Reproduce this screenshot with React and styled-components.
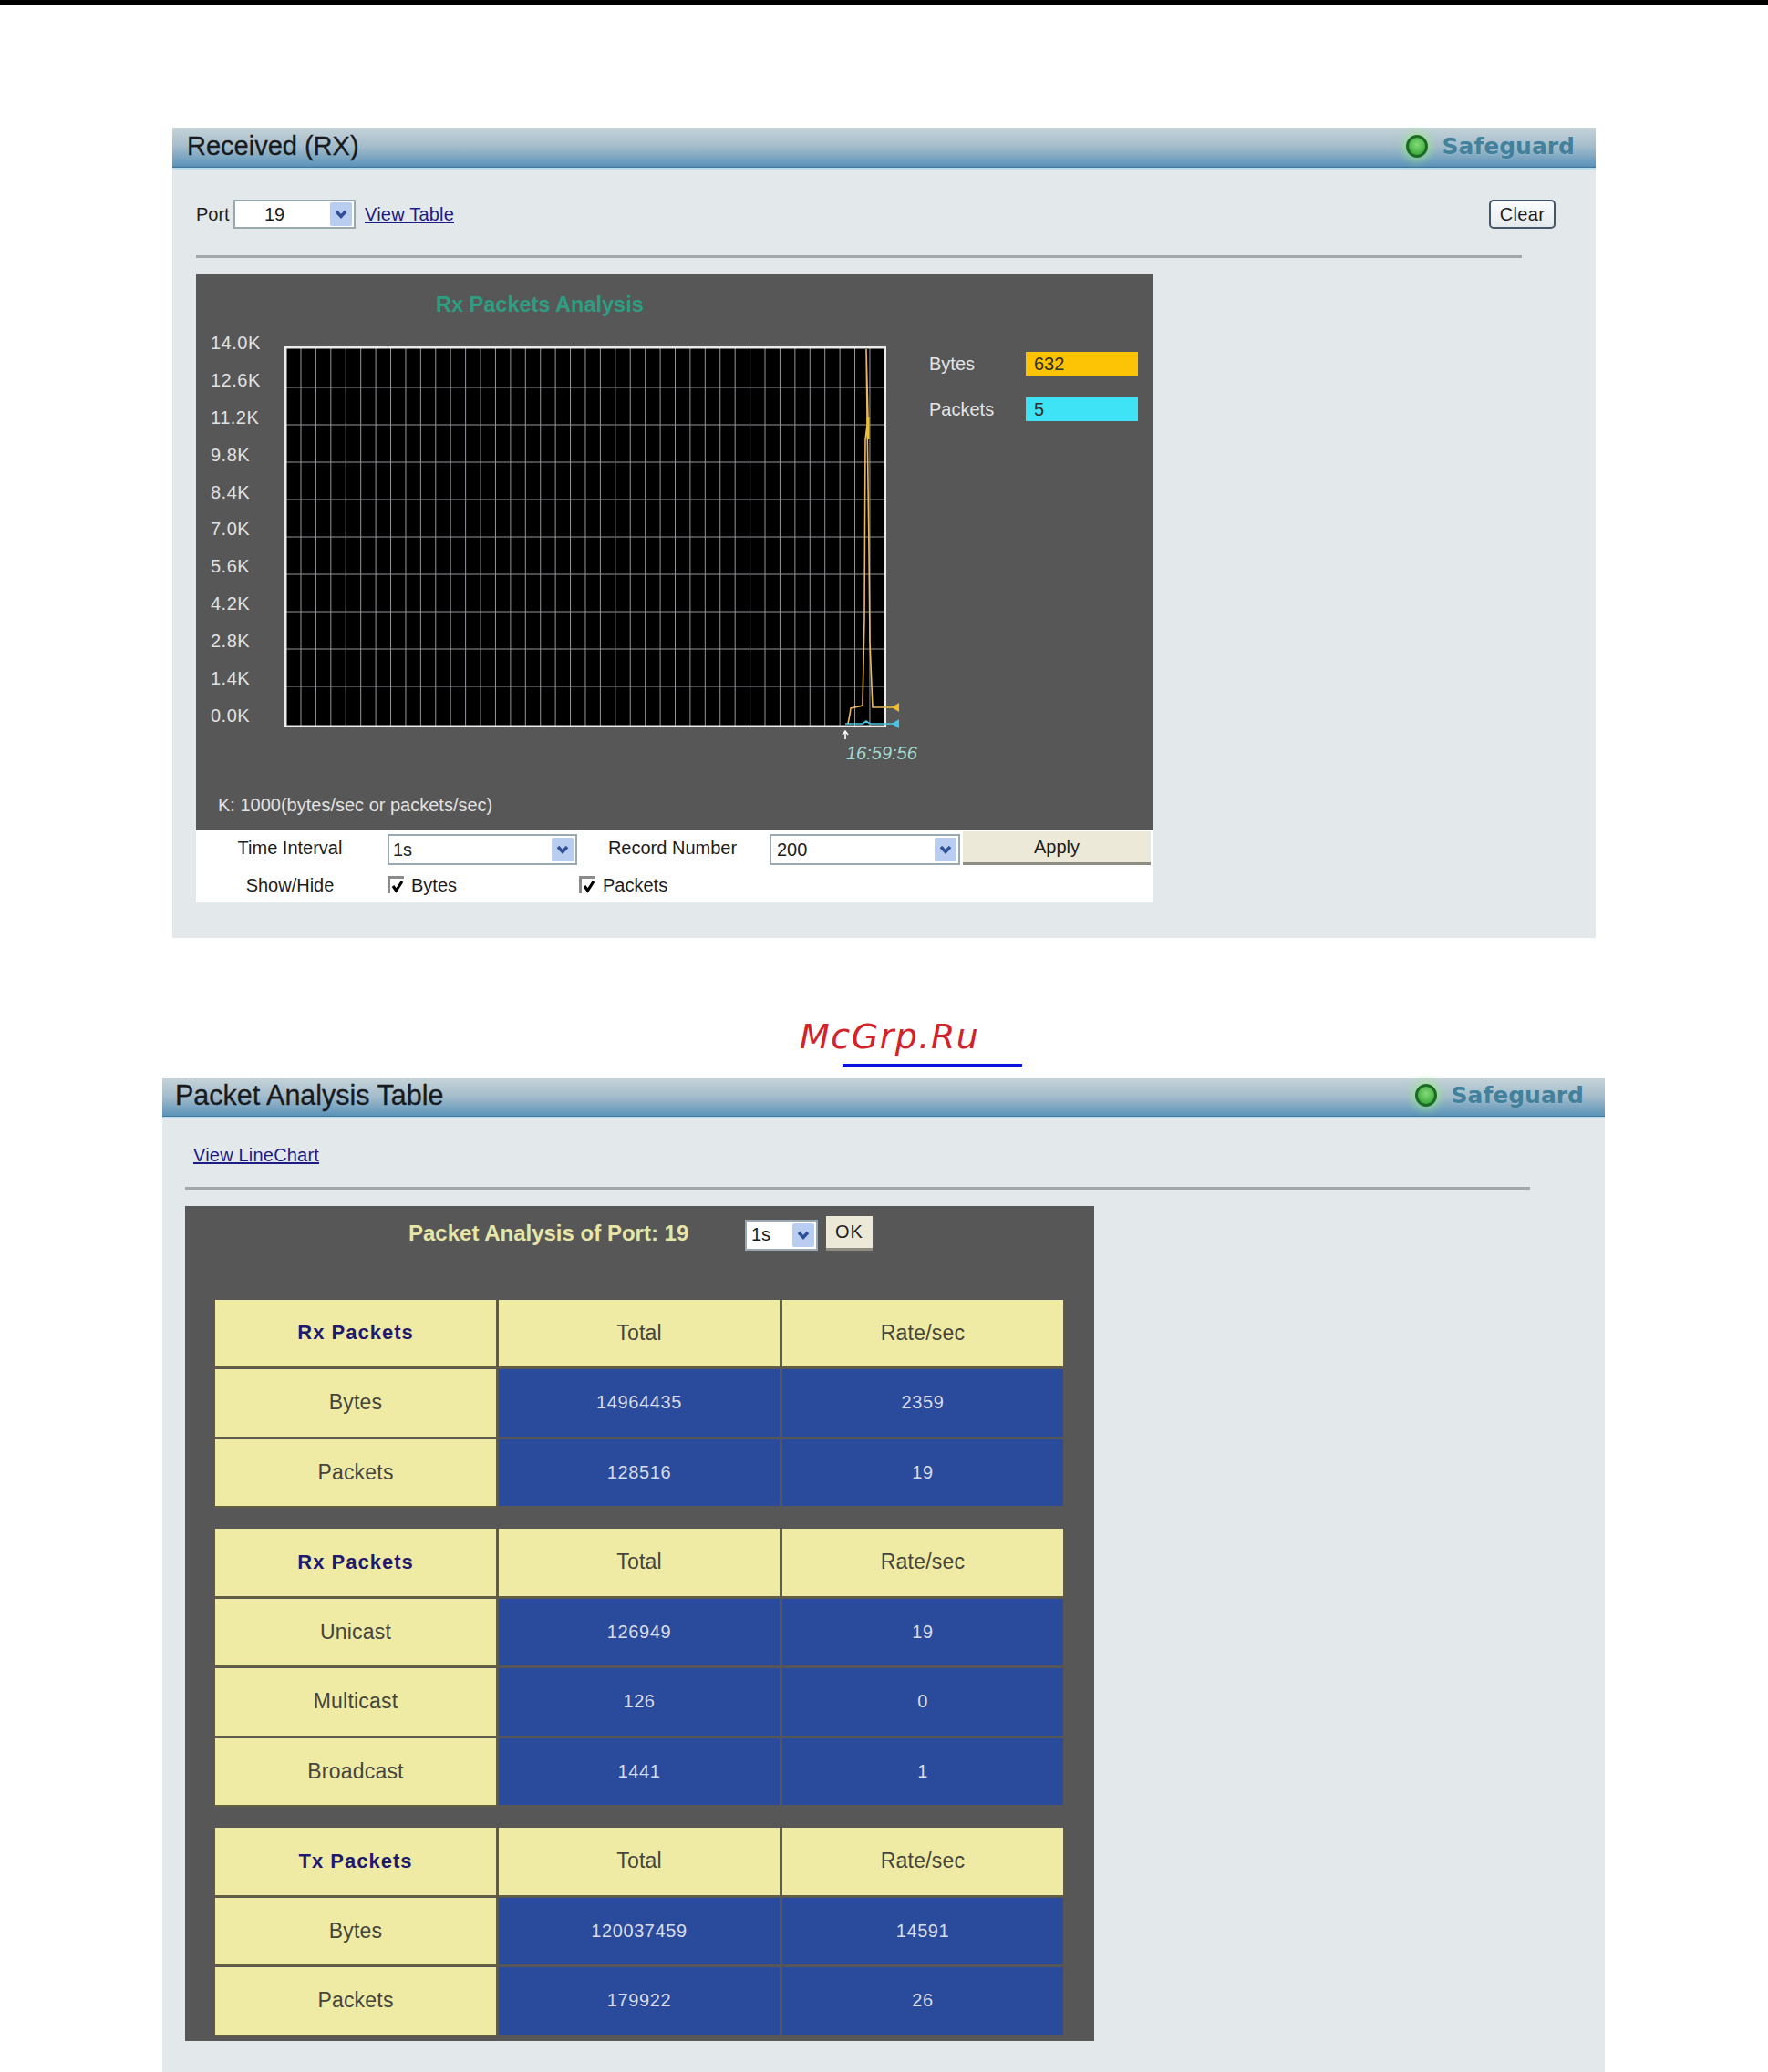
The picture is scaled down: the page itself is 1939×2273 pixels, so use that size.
import React from "react";
import styled, { createGlobalStyle } from "styled-components";

const Global = createGlobalStyle`
  html, body { margin: 0; padding: 0; background: #fff; }
  body { font-family: "Liberation Sans", Arial, sans-serif; font-size: 20px; color: #1c1c1c; }
  * { box-sizing: border-box; }
`;

const Page = styled.div`
  width: 1939px;
  height: 2273px;
  display: flex;
  flex-direction: column;
  overflow: hidden;
`;
const TopBar = styled.div`
  height: 6px;
  background: #000;
  flex: none;
`;
const Panel = styled.section`
  margin-top: ${(p) => p.$top}px;
  margin-left: ${(p) => p.$left}px;
  width: ${(p) => p.$width}px;
  padding-bottom: ${(p) => p.$bottom || 0}px;
  background: #e3e8eb;
  display: flex;
  flex-direction: column;
  flex: ${(p) => (p.$grow ? "1 1 auto" : "none")};
`;
const Header = styled.header`
  height: ${(p) => p.$height}px;
  display: flex;
  align-items: center;
  justify-content: space-between;
  padding: 0 23px ${(p) => p.$lift}px ${(p) => p.$pad}px;
  background: linear-gradient(#c5d3d8 0%, #a4bccb 45%, #5d94ba 92%, #44789a 94%, #44789a 95%, #bcdcf0 96%);
`;
const Title = styled.h1`
  margin: 0;
  font-size: ${(p) => p.$size}px;
  font-weight: normal;
  color: #171b20;
  line-height: 1;
  -webkit-text-stroke: 0.3px #171b20;
`;
const Safeguard = styled.div`
  display: flex;
  align-items: center;
  gap: 16px;
`;
const Led = styled.span`
  width: 24px;
  height: 25px;
  border-radius: 50%;
  border: 3px solid #1d6a24;
  background: radial-gradient(circle at 50% 40%, #84da78, #43b043 70%);
  box-shadow: 0 0 8px 4px rgba(150, 240, 130, 0.55);
`;
const SafeguardText = styled.span`
  font-family: "DejaVu Sans", sans-serif;
  font-weight: bold;
  font-size: 25px;
  line-height: 1;
  color: #43809c;
  text-shadow: 0 0 2px #a9cbd9;
`;
const Toolbar = styled.div`
  margin-top: 33px;
  height: 32px;
  padding: 0 44px 0 26px;
  display: flex;
  align-items: center;
`;
const PortLabel = styled.span`
  width: 41px;
`;
const TextLink = styled.a`
  color: #1f1b85;
  text-decoration: underline;
  letter-spacing: 0.2px;
  cursor: pointer;
`;
const ToolbarLink = styled(TextLink)`
  margin-left: 10px;
`;
const ClearButton = styled.button`
  margin-left: auto;
  width: 73px;
  height: 32px;
  padding: 0;
  font: inherit;
  letter-spacing: 0.3px;
  color: #1c1c1c;
  background: linear-gradient(#fbfdfd, #e4e9ec);
  border: 2px solid #46566a;
  border-radius: 5px;
`;
const Rule = styled.hr`
  margin: ${(p) => p.$top}px 0 0 ${(p) => p.$left}px;
  width: ${(p) => p.$width}px;
  height: 3px;
  border: 0;
  background: #a3a7a9;
`;
const Select = styled.div`
  width: ${(p) => p.$width}px;
  height: ${(p) => p.$height}px;
  flex: none;
  align-self: end;
  display: flex;
  align-items: center;
  justify-content: space-between;
  padding: 0 2px 0 ${(p) => p.$pad}px;
  background: #fff;
  border: 2px solid #9aa8b1;
  color: #1c1c1c;
`;
const SelectArrow = styled.span`
  width: 24px;
  height: 26px;
  border-radius: 2px;
  background: #b8cdf0;
  display: flex;
  align-items: center;
  justify-content: center;
`;
const ChartPanel = styled.div`
  margin: 18px 0 0 26px;
  width: 1049px;
  height: 610px;
  background: #575757;
  display: flex;
  flex-direction: column;
`;
const ChartTitle = styled.h2`
  margin: 18px 0 0 263px;
  font-size: 23.5px;
  line-height: 30px;
  font-weight: bold;
  color: #2f9d82;
`;
const ChartBody = styled.div`
  display: flex;
  align-items: flex-start;
`;
const YAxis = styled.div`
  width: 97px;
  padding: 7px 0 0 16px;
  flex: none;
`;
const YLabel = styled.div`
  height: 40.9px;
  line-height: 40.9px;
  font-size: 20px;
  letter-spacing: 0.5px;
  color: #e2e2e2;
`;
const Plot = styled.svg`
  display: block;
  flex: none;
  margin-top: 31px;
`;
const PlotTime = styled.text`
  font-family: "Liberation Sans", sans-serif;
  font-size: 20px;
  font-style: italic;
  fill: #a4dcd0;
`;
const Legend = styled.div`
  margin-top: 37px;
  display: flex;
  flex-direction: column;
  gap: 24px;
`;
const LegendRow = styled.div`
  display: flex;
  align-items: center;
  color: #e4e4e4;
`;
const LegendName = styled.span`
  width: 106px;
`;
const LegendValue = styled.span`
  width: 123px;
  height: 26px;
  line-height: 26px;
  padding-left: 9px;
  color: #33302a;
  background: ${(p) => p.$color};
`;
const Footnote = styled.div`
  margin-top: auto;
  padding: 0 0 16px 24px;
  line-height: 24px;
  color: #e2e2e2;
`;
const Controls = styled.div`
  margin-left: 26px;
  width: 1049px;
  height: 79px;
  padding-top: 1px;
  background: #fff;
  display: grid;
  grid-template-columns: 210px 208px 211px 212px 206px;
  grid-template-rows: 37px 37px;
  row-gap: 4px;
  align-items: center;
`;
const ControlLabel = styled.span`
  text-align: center;
  padding-right: ${(p) => p.$right || 0}px;
`;
const Check = styled.label`
  display: flex;
  align-items: center;
  gap: 8px;
  padding-left: ${(p) => p.$pad}px;
`;
const CheckBox = styled.span`
  width: 18px;
  height: 19px;
  margin-top: -2px;
  background: #fff;
  border-top: 3px solid #8b8b8b;
  border-left: 3px solid #8b8b8b;
  display: flex;
  align-items: center;
  justify-content: center;
`;
const ApplyButton = styled.button`
  width: 206px;
  height: 37px;
  padding: 0;
  font: inherit;
  color: #1c1c1c;
  background: #ece9d8;
  border: 0;
  border-bottom: 3px solid #8d8d84;
`;
const Watermark = styled.div`
  margin: 86px 0 0 877px;
  width: 250px;
  flex: none;
`;
const WatermarkText = styled.div`
  font-family: "DejaVu Sans", sans-serif;
  font-style: italic;
  font-size: 38px;
  line-height: 44px;
  letter-spacing: 1.5px;
  white-space: nowrap;
  color: #d2222a;
`;
const WatermarkLine = styled.div`
  margin: 8px 0 0 47px;
  width: 197px;
  height: 3px;
  background: #0a14e0;
`;
const LinkRow = styled.div`
  margin: 28px 0 0 34px;
  line-height: 24px;
`;
const TablesPanel = styled.div`
  margin: 18px 0 36px 25px;
  width: 997px;
  height: 916px;
  padding: 10.5px 0 0 33px;
  background: #575757;
  display: flex;
  flex-direction: column;
`;
const AnalysisBar = styled.div`
  height: 38px;
  padding-left: 212px;
  display: flex;
  align-items: center;
  margin-bottom: 54px;
`;
const AnalysisTitle = styled.h2`
  margin: 0 61px 0 0;
  width: 308px;
  font-size: 24px;
  font-weight: bold;
  white-space: nowrap;
  color: #e7e5a8;
`;
const OkButton = styled.button`
  margin-left: 9px;
  width: 51px;
  height: 38px;
  padding: 0;
  font: inherit;
  letter-spacing: 1px;
  color: #1c1c1c;
  background: #ece9d8;
  border: 0;
  border-bottom: 3px solid #8d8d84;
`;
const Stats = styled.div`
  width: 930px;
  margin-bottom: 25px;
  display: grid;
  grid-template-columns: repeat(3, 308px);
  grid-auto-rows: 73.5px;
  gap: 3px;
`;
const Cell = styled.div`
  display: flex;
  align-items: center;
  justify-content: center;
  background: #f0eba4;
  color: #45453c;
  font-size: 23px;
  letter-spacing: 0.2px;
  box-shadow: 0 1px 0 1px rgba(110, 100, 50, 0.55);
`;
const HeadCell = styled(Cell)`
  font-weight: bold;
  font-size: 22px;
  letter-spacing: 1px;
  color: #1f1a6e;
`;
const ValueCell = styled.div`
  display: flex;
  align-items: center;
  justify-content: center;
  background: #2a4a9c;
  color: #d7dcea;
  font-size: 20px;
  letter-spacing: 0.6px;
`;

const Chevron = () => (
  <svg width="16" height="12" viewBox="0 0 16 12">
    <polyline points="3,3 8,8.5 13,3" fill="none" stroke="#2f4f96" strokeWidth="3.4" />
  </svg>
);
const Dropdown = ({ value, width, height = 34, pad }) => (
  <Select $width={width} $height={height} $pad={pad}>
    <span>{value}</span>
    <SelectArrow>
      <Chevron />
    </SelectArrow>
  </Select>
);
const Checked = ({ label, pad }) => (
  <Check $pad={pad}>
    <CheckBox>
      <svg width="14" height="15" viewBox="0 0 14 15">
        <polyline points="2,7 5.5,12 12,2" fill="none" stroke="#000" strokeWidth="3.2" />
      </svg>
    </CheckBox>
    {label}
  </Check>
);
const SafeguardMark = () => (
  <Safeguard>
    <Led />
    <SafeguardText>Safeguard</SafeguardText>
  </Safeguard>
);

const yLabels = ["14.0K", "12.6K", "11.2K", "9.8K", "8.4K", "7.0K", "5.6K", "4.2K", "2.8K", "1.4K", "0.0K"];
const vLines = Array.from({ length: 39 }, (_, i) => 18 + i * 16.42);
const hLines = Array.from({ length: 9 }, (_, i) => 45 + i * 41);

const Chart = () => (
  <Plot width="707" height="460" viewBox="0 0 707 460">
    <rect x="1" y="1" width="658" height="416" fill="#000" />
    {vLines.map((x) => (
      <line key={x} x1={x} x2={x} y1="2" y2="416" stroke="#92969a" strokeWidth="1" />
    ))}
    {hLines.map((y) => (
      <line key={y} x1="2" x2="658" y1={y} y2={y} stroke="#92969a" strokeWidth="1" />
    ))}
    <rect x="1.25" y="1.25" width="657.5" height="415.5" fill="none" stroke="#ececec" strokeWidth="2.5" />
    <polyline
      points="618,414 620,404 621,397 634,394 636,298 637,102 640,78 638,3 641,224 642,324 644,373 645,396 660,396"
      fill="none"
      stroke="#e8b766"
      strokeWidth="1.6"
    />
    <line x1="640" x2="640" y1="78" y2="102" stroke="#eec22a" strokeWidth="3" />
    <polyline points="615,414 634,414 638,411 642,414 660,414" fill="none" stroke="#48c8e4" strokeWidth="1.6" />
    <line x1="660" x2="668" y1="396" y2="396" stroke="#f3bd2a" strokeWidth="1.6" />
    <line x1="660" x2="668" y1="414" y2="414" stroke="#48c4e6" strokeWidth="1.6" />
    <polygon points="666,396 674,391 674,401" fill="#f3bd2a" />
    <polygon points="666,414 674,409 674,419" fill="#48c4e6" />
    <polyline points="612,426 615,422 618,426" fill="none" stroke="#fff" strokeWidth="1.4" />
    <line x1="615" x2="615" y1="422" y2="431" stroke="#fff" strokeWidth="1.6" />
    <PlotTime x="616" y="453">16:59:56</PlotTime>
  </Plot>
);

const StatsTable = ({ title, rows }) => (
  <Stats>
    <HeadCell>{title}</HeadCell>
    <Cell>Total</Cell>
    <Cell>Rate/sec</Cell>
    {rows.map(([name, total, rate]) => (
      <React.Fragment key={name}>
        <Cell>{name}</Cell>
        <ValueCell>{total}</ValueCell>
        <ValueCell>{rate}</ValueCell>
      </React.Fragment>
    ))}
  </Stats>
);

export default function App() {
  return (
    <Page>
      <Global />
      <TopBar />
      <Panel $top={134} $left={189} $width={1561} $bottom={39}>
        <Header $height={46} $pad={16} $lift={5}>
          <Title $size={29}>Received (RX)</Title>
          <SafeguardMark />
        </Header>
        <Toolbar>
          <PortLabel>Port</PortLabel>
          <Dropdown value="19" width={134} height={32} pad={32} />
          <ToolbarLink>View Table</ToolbarLink>
          <ClearButton>Clear</ClearButton>
        </Toolbar>
        <Rule $top={29} $left={26} $width={1454} />
        <ChartPanel>
          <ChartTitle>Rx Packets Analysis</ChartTitle>
          <ChartBody>
            <YAxis>
              {yLabels.map((l) => (
                <YLabel key={l}>{l}</YLabel>
              ))}
            </YAxis>
            <Chart />
            <Legend>
              <LegendRow>
                <LegendName>Bytes</LegendName>
                <LegendValue $color="#fcc405">632</LegendValue>
              </LegendRow>
              <LegendRow>
                <LegendName>Packets</LegendName>
                <LegendValue $color="#3fe3f6">5</LegendValue>
              </LegendRow>
            </Legend>
          </ChartBody>
          <Footnote>K: 1000(bytes/sec or packets/sec)</Footnote>
        </ChartPanel>
        <Controls>
          <ControlLabel $right={4}>Time Interval</ControlLabel>
          <Dropdown value="1s" width={208} pad={4} />
          <ControlLabel $right={2}>Record Number</ControlLabel>
          <Dropdown value="200" width={209} pad={6} />
          <ApplyButton>Apply</ApplyButton>
          <ControlLabel $right={4}>Show/Hide</ControlLabel>
          <Checked label="Bytes" pad={0} />
          <Checked label="Packets" pad={2} />
        </Controls>
      </Panel>
      <Watermark>
        <WatermarkText>McGrp.Ru</WatermarkText>
        <WatermarkLine />
      </Watermark>
      <Panel $top={13} $left={178} $width={1582} $grow>
        <Header $height={44} $pad={14} $lift={8}>
          <Title $size={30.5}>Packet Analysis Table</Title>
          <SafeguardMark />
        </Header>
        <LinkRow>
          <TextLink>View LineChart</TextLink>
        </LinkRow>
        <Rule $top={23} $left={25} $width={1475} />
        <TablesPanel>
          <AnalysisBar>
            <AnalysisTitle>Packet Analysis of Port: 19</AnalysisTitle>
            <Dropdown value="1s" width={80} pad={5} />
            <OkButton>OK</OkButton>
          </AnalysisBar>
          <StatsTable
            title="Rx Packets"
            rows={[
              ["Bytes", "14964435", "2359"],
              ["Packets", "128516", "19"],
            ]}
          />
          <StatsTable
            title="Rx Packets"
            rows={[
              ["Unicast", "126949", "19"],
              ["Multicast", "126", "0"],
              ["Broadcast", "1441", "1"],
            ]}
          />
          <StatsTable
            title="Tx Packets"
            rows={[
              ["Bytes", "120037459", "14591"],
              ["Packets", "179922", "26"],
            ]}
          />
        </TablesPanel>
      </Panel>
    </Page>
  );
}
